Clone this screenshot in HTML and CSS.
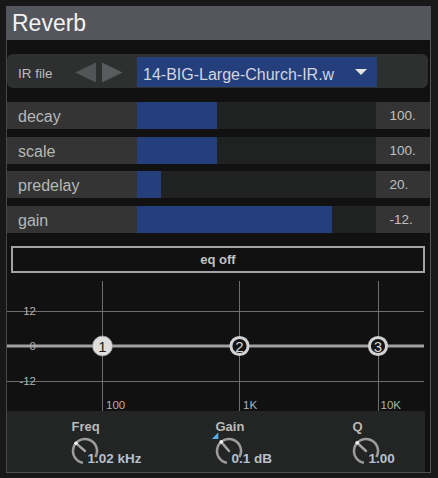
FILE: index.html
```html
<!DOCTYPE html>
<html>
<head>
<meta charset="utf-8">
<title>Reverb</title>
<link rel="stylesheet" href="styles.css">
</head>
<body>
<div class="frame">
  <div class="header">Reverb</div>
  <div class="panel">
    <div class="ir-row">
      <div class="ir-label">IR file</div>
      <svg class="ir-arrows" width="48" height="21" viewBox="0 0 48 21">
        <polygon class="arrow-l" points="0,10.5 21,0.5 21,20.5"/>
        <polygon class="arrow-r" points="27,0.5 27,20.5 47.5,10.5"/>
      </svg>
      <div class="ir-select">
        <span class="ir-name">14-BIG-Large-Church-IR.w</span>
        <svg class="ir-caret" width="12" height="6" viewBox="0 0 12 6"><polygon points="0,0 12,0 6,6"/></svg>
      </div>
    </div>

    <div class="sliders">
      <div class="slider">
        <div class="s-label">decay</div>
        <div class="s-track"><div class="s-fill" style="width:80px"></div></div>
        <div class="s-value">100.</div>
      </div>
      <div class="slider">
        <div class="s-label">scale</div>
        <div class="s-track"><div class="s-fill" style="width:80px"></div></div>
        <div class="s-value">100.</div>
      </div>
      <div class="slider">
        <div class="s-label">predelay</div>
        <div class="s-track"><div class="s-fill" style="width:24px"></div></div>
        <div class="s-value">20.</div>
      </div>
      <div class="slider">
        <div class="s-label">gain</div>
        <div class="s-track"><div class="s-fill" style="width:195px"></div></div>
        <div class="s-value">-12.</div>
      </div>
    </div>

    <div class="eq-btn">eq off</div>

    <svg class="eq-graph" width="418" height="138" viewBox="0 0 418 138">
      <g class="grid-line">
        <line x1="0" y1="38.5" x2="417" y2="38.5"/>
        <line x1="0" y1="108.5" x2="417" y2="108.5"/>
        <line x1="95.5" y1="8" x2="95.5" y2="138"/>
        <line x1="232.5" y1="8" x2="232.5" y2="138"/>
        <line x1="371.5" y1="8" x2="371.5" y2="138"/>
      </g>
      <line class="zero-line" x1="0" y1="73" x2="417" y2="73"/>
      <text class="g-label" x="29" y="41.5" text-anchor="end">12</text>
      <text class="g-label" x="29" y="76.5" text-anchor="end">0</text>
      <text class="g-label" x="29" y="112" text-anchor="end">-12</text>
      <text class="g-label" x="99" y="135.5">100</text>
      <text class="g-label" x="236" y="135.5">1K</text>
      <text class="g-label" x="373.5" y="135.5">10K</text>

      <circle class="node-on" cx="95.5" cy="73" r="10"/>
      <text class="node-num-on" x="95.5" y="78.5" text-anchor="middle">1</text>
      <circle class="node-off" cx="232.5" cy="73" r="8.6"/>
      <text class="node-num-off" x="232.5" y="78.5" text-anchor="middle">2</text>
      <circle class="node-off" cx="371" cy="73" r="8.6"/>
      <text class="node-num-off" x="371" y="78.5" text-anchor="middle">3</text>
    </svg>

    <div class="knobs">
      <div class="knob">
        <div class="k-label">Freq</div>
        <div class="k-row">
          <svg class="k-dial" width="30" height="30" viewBox="0 0 30 30">
            <path class="k-arc" d="M12.92 26.82 A12 12 0 1 1 25.39 21"/>
            <line class="k-ptr" x1="15" y1="15" x2="6.2" y2="7.4"/>
            <circle class="k-dot" cx="6" cy="7.2" r="1.8"/>
          </svg>
          <span class="k-value">1.02 kHz</span>
        </div>
      </div>
      <div class="knob">
        <div class="k-label">Gain</div>
        <div class="k-row">
          <svg class="k-dial" width="30" height="30" viewBox="0 0 30 30">
            <polygon class="k-default" points="4.3,-3.5 -2.2,3 4.3,3"/>
            <path class="k-arc" d="M12.92 26.82 A12 12 0 1 1 25.39 21"/>
            <line class="k-ptr" x1="15" y1="15" x2="7.4" y2="6.1"/>
            <circle class="k-dot" cx="7.2" cy="5.9" r="1.8"/>
          </svg>
          <span class="k-value">0.1 dB</span>
        </div>
      </div>
      <div class="knob">
        <div class="k-label">Q</div>
        <div class="k-row">
          <svg class="k-dial" width="30" height="30" viewBox="0 0 30 30">
            <path class="k-arc" d="M12.92 26.82 A12 12 0 1 1 25.39 21"/>
            <line class="k-ptr" x1="15" y1="15" x2="6.4" y2="7"/>
            <circle class="k-dot" cx="6.2" cy="6.8" r="1.8"/>
          </svg>
          <span class="k-value">1.00</span>
        </div>
      </div>
    </div>
  </div>
</div>
</body>
</html>
```

FILE: styles.css
```css
* {
  box-sizing: border-box;
}

html, body {
  margin: 0;
  padding: 0;
}

body {
  background: #181818;
  font-family: "Liberation Sans", Arial, sans-serif;
  width: 438px;
  height: 478px;
  overflow: hidden;
  padding: 6px 0 0 6px;
}

.frame {
  width: 425px;
}

.header {
  height: 34px;
  background: #53565c;
  color: #f2f2f2;
  font-size: 23px;
  line-height: 34px;
  padding-left: 6px;
}

.panel {
  background: #111111;
  border-left: 1px solid #474747;
  border-right: 1px solid #575757;
  border-bottom: 1px solid #505050;
  padding-top: 14px;
}

/* IR file row */
.ir-row {
  display: flex;
  align-items: center;
  height: 34px;
  padding: 3px 0 1px;
  margin-right: 2px;
  background: #2e2f2f;
  border-radius: 6px;
}

.ir-label {
  width: 68px;
  flex: none;
  padding: 2px 0 0 11px;
  font-size: 13.5px;
  color: #b9bcbe;
}

.ir-arrows {
  display: block;
  flex: none;
}

.arrow-l {
  fill: #525455;
}

.arrow-r {
  fill: #595b5c;
}

.ir-select {
  margin-left: 14px;
  width: 240px;
  height: 30px;
  flex: none;
  background: #243f7b;
  display: flex;
  align-items: center;
  justify-content: space-between;
  padding: 0 10px 0 6px;
}

.ir-name {
  font-size: 16px;
  line-height: 20px;
  margin-top: 5px;
  color: #d0d5e0;
  white-space: nowrap;
}

.ir-caret {
  display: block;
  fill: #e4e4e4;
}

/* sliders */
.sliders {
  margin-top: 14px;
  display: flex;
  flex-direction: column;
  gap: 7.5px;
}

.slider {
  display: flex;
  height: 27px;
}

.s-label {
  width: 130px;
  flex: none;
  background: #333433;
  color: #b5b8bb;
  font-size: 16px;
  line-height: 25px;
  padding: 2px 0 0 11px;
}

.s-track {
  width: 239px;
  flex: none;
  background: #202121;
}

.s-fill {
  height: 100%;
  background: #243f7b;
}

.s-value {
  width: 54px;
  flex: none;
  background: #333433;
  color: #bfc2c4;
  font-size: 13.5px;
  line-height: 27px;
  padding-left: 13.5px;
}

/* eq button */
.eq-btn {
  margin: 13.5px 5px 0 4px;
  height: 27px;
  border: 2px solid #a3a3a3;
  color: #c2c2c2;
  font-weight: bold;
  font-size: 13px;
  line-height: 23px;
  text-align: center;
}

/* eq graph */
.eq-graph {
  display: block;
  width: 418px;
  height: 138px;
}

.grid-line line {
  stroke: #6e6e6e;
  stroke-width: 1;
}

.zero-line {
  stroke: #a2a2a2;
  stroke-width: 3;
}

.g-label {
  font-family: "Liberation Sans", Arial, sans-serif;
  font-size: 11.5px;
  fill: #b0b0b0;
}

.node-on {
  fill: #dedede;
  stroke: #9a9a9a;
  stroke-width: 0.8;
}

.node-off {
  fill: #141414;
  stroke: #d2d2d2;
  stroke-width: 3;
}

.node-num-on {
  font-family: "Liberation Sans", Arial, sans-serif;
  font-size: 15px;
  fill: #1c1c1c;
}

.node-num-off {
  font-family: "Liberation Sans", Arial, sans-serif;
  font-size: 15px;
  fill: #d6d6d6;
}

/* knobs */
.knobs {
  width: 418px;
  height: 61px;
  background: #232524;
  display: grid;
  grid-template-columns: 144px 137px auto;
  padding: 8px 0 0 62.5px;
}

.knob {
  display: flex;
  flex-direction: column;
}

.k-label {
  font-size: 13px;
  font-weight: bold;
  color: #bababa;
  line-height: 15px;
  padding-left: 2px;
}

.k-row {
  display: flex;
  align-items: flex-end;
  margin-top: 2px;
}

.k-dial {
  display: block;
  flex: none;
  width: 30px;
  height: 30px;
  overflow: visible;
}

.k-arc {
  fill: none;
  stroke: #9c9c9c;
  stroke-width: 2.5;
}

.k-ptr {
  stroke: #a3a3a3;
  stroke-width: 2.5;
  stroke-linecap: round;
}

.k-dot {
  fill: #f4f4f4;
}

.k-default {
  fill: #5aaee6;
}

.k-value {
  font-size: 13.5px;
  font-weight: bold;
  color: #b6bfce;
  line-height: 14px;
  margin-left: -12px;
  white-space: nowrap;
}
```
